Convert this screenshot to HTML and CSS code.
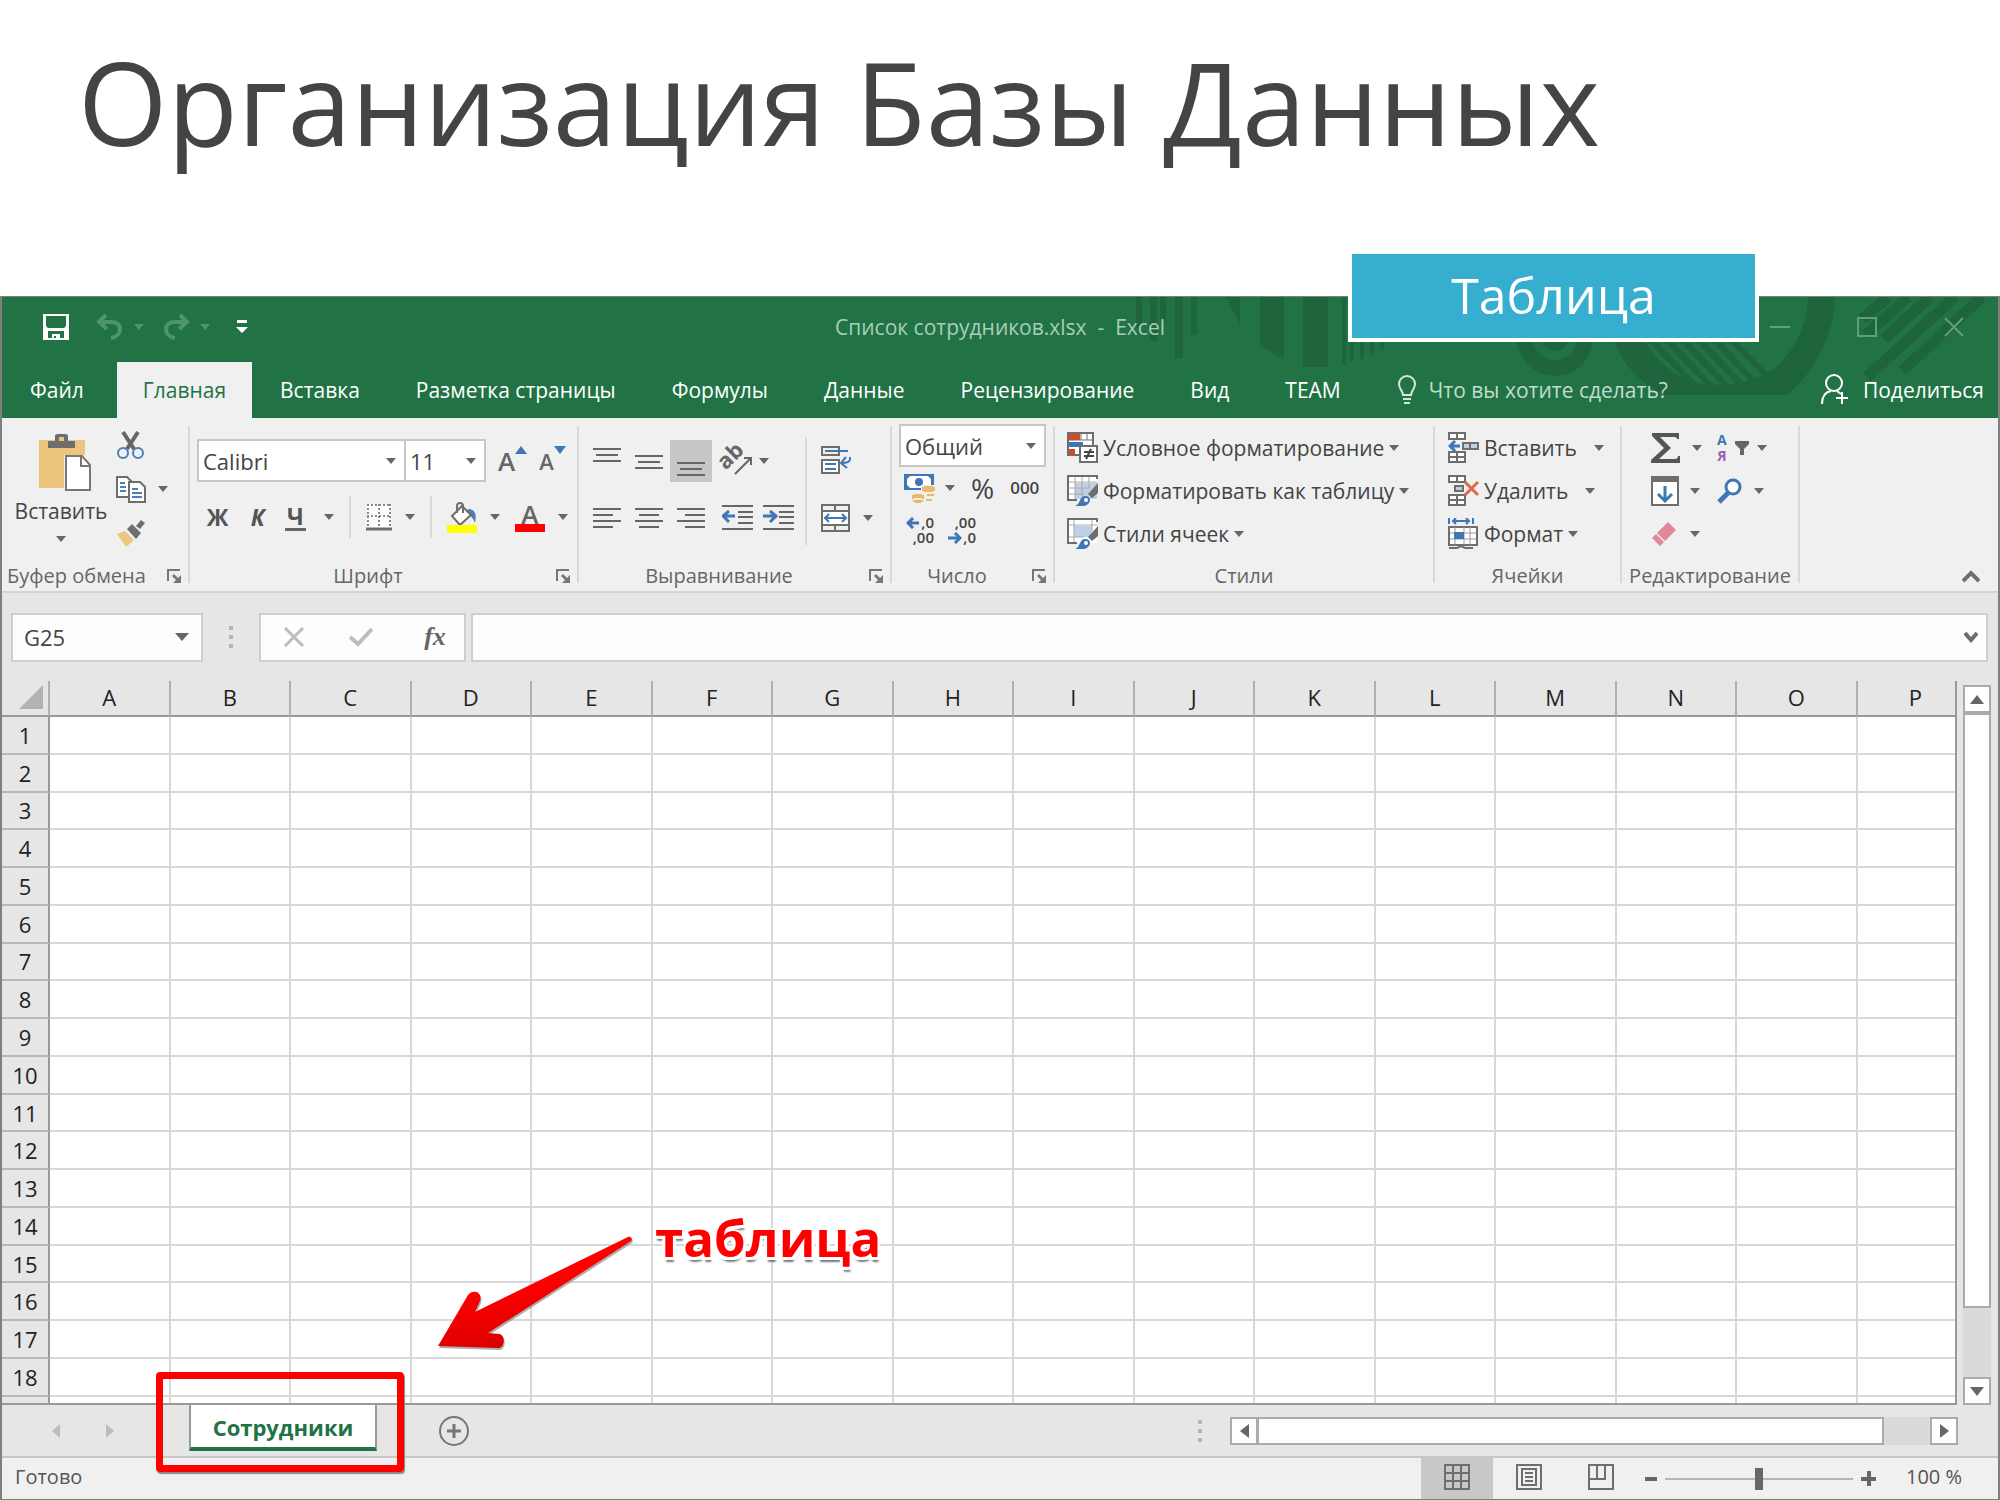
FILE: index.html
```html
<!DOCTYPE html>
<html lang="ru">
<head>
<meta charset="utf-8">
<title>Организация Базы Данных</title>
<link rel="stylesheet" href="styles.css">
</head>
<body>
<header class="slide-head"><h1>Организация Базы Данных</h1></header>

<main class="window">
  <div class="badge">Таблица</div>

  <div class="chrome">
    <svg class="pattern" viewBox="1120 0 878 121" width="878" height="121" aria-hidden="true">
      <g fill="#1e643d">
        <path d="M1136 0h6v31h-6zM1150 0h7v44h-7zM1175 0h8v61h-8zM1191 0h6v38h-6zM1160 0h6v24h-6zM1226 0h14v27zM1260 0h24v63l-24-15zM1303 0h25v70h-25zM1342 0h4v68h-4zM1350 0h4v64h-4zM1360 0h4v62h-4zM1370 0h4v58h-4zM1380 0h4v52h-4z"/>
        <circle cx="1555" cy="41" r="13"/>
        <path d="M1610 30C1616 60 1636 84 1665 98H1787C1815 75 1835 35 1835 0H1808C1808 30 1790 65 1765 77C1740 90 1705 90 1690 84C1660 70 1645 50 1640 30z"/>
      </g>
      <g fill="none" stroke="#1e643d">
        <circle cx="1555" cy="41" r="30" stroke-width="16"/>
        <path d="M1644 36l52 54M1660 36l52 54M1676 36l50 52M1692 36l48 50M1708 36l44 46M1724 36l42 42" stroke-width="6"/>
        <path d="M1982 0l-80 74M1955 0l-88 80M1930 0l-46 42M1908 0l-42 38M1888 0l-26 22" stroke-width="11"/>
      </g>
    </svg>

    <div class="titlebar">
      <div class="quick">
        <button class="ib" aria-label="Сохранить"><svg width="28" height="28" viewBox="0 0 28 28"><path d="M1 1h26v26H1z" fill="#fff"/><path d="M4 3h20v10l-2 2H6l-2-2z" fill="#217346"/><path d="M6 18h16v7H6z" fill="#217346"/><path d="M10 21h8v4h-4v-2h-2v2h-2z" fill="#fff"/></svg></button>
        <button class="ib undo" aria-label="Отменить"><svg width="28" height="28" viewBox="0 0 28 28" fill="none" stroke="#4f9370" stroke-width="4"><path d="M10 2L3 9l8 7M4 9h11c6 0 9 3 9 7s-3 8-9 9"/></svg><i class="dd"></i></button>
        <button class="ib redo" aria-label="Повторить"><svg width="28" height="28" viewBox="0 0 28 28" fill="none" stroke="#4f9370" stroke-width="4"><path d="M18 2l7 7-8 7M24 9H13c-6 0-9 3-9 7s3 8 9 9"/></svg><i class="dd"></i></button>
        <button class="ib" aria-label="Настройка панели"><svg width="12" height="14" viewBox="0 0 12 14" fill="#fff"><path d="M1 0h10v3H1zM0 7h12l-6 6z"/></svg></button>
      </div>
      <div class="doc">Список сотрудников.xlsx&nbsp; -&nbsp; Excel</div>
      <div class="sys">
        <button class="ib" aria-label="Свернуть"><svg width="20" height="20" fill="none" stroke="#5f9f7d" stroke-width="2"><path d="M0 10h20"/></svg></button>
        <button class="ib" aria-label="Развернуть"><svg width="20" height="20" fill="none" stroke="#5f9f7d" stroke-width="2"><path d="M1 1h18v18H1z"/></svg></button>
        <button class="ib" aria-label="Закрыть"><svg width="20" height="20" fill="none" stroke="#5f9f7d" stroke-width="2"><path d="M1 1l18 18M19 1L1 19"/></svg></button>
      </div>
    </div>

    <nav class="tabs">
      <button class="tab file">Файл</button>
      <button class="tab active">Главная</button>
      <button class="tab">Вставка</button>
      <button class="tab">Разметка страницы</button>
      <button class="tab">Формулы</button>
      <button class="tab">Данные</button>
      <button class="tab">Рецензирование</button>
      <button class="tab">Вид</button>
      <button class="tab">TEAM</button>
      <button class="tab tell"><svg width="20" height="30" viewBox="0 0 20 30" fill="none" stroke="#d5e6dc" stroke-width="2"><path d="M6 20c0-4-4-6-4-11a8 8 0 0 1 16 0c0 5-4 7-4 11zM6 24h8M7 28h6"/></svg>Что вы хотите сделать?</button>
      <button class="tab share"><svg width="30" height="32" viewBox="0 0 30 32" fill="none" stroke="#fff" stroke-width="2"><circle cx="14" cy="9" r="8"/><path d="M2 30c0-8 4-12 9-13M17 17l4 3M22 18v12M16 24h12"/></svg>Поделиться</button>
    </nav>
  </div>

  <div class="ribbon">
    <section class="group g-clip">
      <div class="body">
        <button class="paste">
          <svg width="54" height="58" viewBox="0 0 54 58"><path d="M1 7h46v48H1z" fill="#ecc57e"/><path d="M10 15V8h7V3q0-2 3-2h7q3 0 3 2v5h7v7z" fill="#6e6e6e"/><path d="M21 4h5v4h-5z" fill="#ecc57e"/><path d="M26 22h28v36H26z" fill="#f0f0f0"/><path d="M28 23h16l8 9v25H28z" fill="#fff" stroke="#777" stroke-width="2"/><path d="M43 23v10h9" fill="none" stroke="#777" stroke-width="2"/></svg>
          <span>Вставить</span><i class="dd"></i>
        </button>
        <div class="stack">
          <button class="ib" aria-label="Вырезать"><svg width="30" height="30" viewBox="0 0 30 30" fill="none"><path d="M7 2l11 17M22 2L11 19" stroke="#666" stroke-width="4"/><circle cx="7" cy="23" r="5" stroke="#4a7fb8" stroke-width="2"/><circle cx="22" cy="23" r="5" stroke="#4a7fb8" stroke-width="2"/></svg></button>
          <button class="ib" aria-label="Копировать"><svg width="30" height="30" viewBox="0 0 30 30"><g fill="#fff" stroke="#6e6e6e" stroke-width="2"><path d="M1 3h10l5 5v15H1z"/><path d="M13 8h11l5 5v15H13z"/></g><path d="M4 9h5M4 13h6M4 17h6M16 15h6M16 19h10M16 23h10" stroke="#4a7fb8" stroke-width="2"/></svg><i class="dd"></i></button>
          <button class="ib" aria-label="Формат по образцу"><svg width="30" height="30" viewBox="0 0 30 30"><path d="M1 16l8-3 9 9-8 7z" fill="#ecc57e"/><path d="M11 11l5-5 9 9-5 6zM20 8l5-6 4 3-5 6z" fill="#6e6e6e"/></svg></button>
        </div>
      </div>
      <footer><span>Буфер обмена</span><button class="ib" aria-label="Параметры буфера"><svg class="launch" viewBox="0 0 15 15" width="15" height="15"><use href="#launch"/></svg></button></footer>
    </section>

    <section class="group g-font">
      <div class="body col">
        <div class="row r1">
          <label class="pick fontname"><select aria-label="Шрифт"><option>Calibri</option></select><i class="dd"></i></label><label class="pick fontsize"><select aria-label="Размер"><option>11</option></select><i class="dd"></i></label>
          <button class="ib grow" aria-label="Увеличить размер"><b class="aa">A</b><svg width="12" height="8"><path d="M0 8l6-8 6 8z" fill="#3f76b5"/></svg></button>
          <button class="ib shrink" aria-label="Уменьшить размер"><b class="aa small">A</b><svg width="12" height="8"><path d="M0 0h12l-6 8z" fill="#3f76b5"/></svg></button>
        </div>
        <div class="row r2">
          <button class="ib fmt"><b>Ж</b></button>
          <button class="ib fmt"><b><em>К</em></b></button>
          <button class="ib fmt und"><b>Ч</b><i class="dd"></i></button>
          <span class="vsep"></span>
          <button class="ib" aria-label="Границы"><svg width="26" height="28" viewBox="0 0 26 28" fill="none"><path d="M1 1h24v24H1z" fill="#fff"/><path d="M1 2h24M1 13h24M2 1v23M13 1v23M24 1v23" stroke="#888" stroke-width="2" stroke-dasharray="2 2"/><path d="M0 26h26" stroke="#6e6e6e" stroke-width="3"/></svg><i class="dd"></i></button>
          <span class="vsep"></span>
          <button class="ib" aria-label="Заливка"><svg width="30" height="32" viewBox="0 0 30 32"><path d="M21 8c7 0 9 5 7 14-2-5-4-8-9-9z" fill="#4a7fb8"/><path d="M5 15L15 5l9 9-11 10z" fill="#fff" stroke="#6e6e6e" stroke-width="2"/><path d="M10 12V5q0-3 3-3t3 3v7" fill="none" stroke="#6e6e6e" stroke-width="2"/><path d="M0 24h30v8H0z" fill="#ff0"/></svg><i class="dd"></i></button>
          <button class="ib fontcol" aria-label="Цвет шрифта"><b class="aa">A</b><i class="dd"></i></button>
        </div>
      </div>
      <footer><span>Шрифт</span><button class="ib" aria-label="Параметры шрифта"><svg class="launch" viewBox="0 0 15 15" width="15" height="15"><use href="#launch"/></svg></button></footer>
    </section>

    <section class="group g-align">
      <div class="body">
        <div class="aligns">
          <button class="cell" aria-label="По верхнему краю"><svg width="28" height="28"><path d="M0 1h28v2H0zM3 7h22v2H3zM0 13h28v2H0z"/></svg></button>
          <button class="cell" aria-label="По середине"><svg width="28" height="28"><path d="M0 8h28v2H0zM3 14h22v2H3zM0 20h28v2H0z"/></svg></button>
          <button class="cell on" aria-label="По нижнему краю"><svg width="28" height="30"><path d="M0 16h28v2H0zM3 22h22v2H3zM0 28h28v2H0z"/></svg></button>
          <button class="ib wide" aria-label="Ориентация"><svg width="32" height="32" viewBox="0 0 32 32" overflow="visible"><text x="1" y="21" transform="rotate(-45 8 20)" font-size="22" font-weight="700" font-family="Open Sans, sans-serif" fill="#666">ab</text><path d="M13 29l15-15M29 20v-7h-7" fill="none" stroke="#666" stroke-width="2"/></svg><i class="dd"></i></button>
          <button class="cell" aria-label="По левому краю"><svg width="28" height="28"><path d="M0 5h28v2H0zM0 11h20v2H0zM0 17h28v2H0zM0 23h20v2H0z"/></svg></button>
          <button class="cell" aria-label="По центру"><svg width="28" height="28"><path d="M0 5h28v2H0zM4 11h20v2H4zM0 17h28v2H0zM4 23h20v2H4z"/></svg></button>
          <button class="cell" aria-label="По правому краю"><svg width="28" height="28"><path d="M0 5h28v2H0zM8 11h20v2H8zM0 17h28v2H0zM8 23h20v2H8z"/></svg></button>
          <div class="row wide">
            <button class="ib" aria-label="Уменьшить отступ"><svg width="31" height="28"><path d="M0 2h31v2H0zM16 8h15v2H16zM16 13h15v2H16zM16 19h15v2H16zM0 25h31v2H0z"/><path d="M1 13h12M7 8l-6 5 6 6" fill="none" stroke="#3f76b5" stroke-width="3"/></svg></button>
            <button class="ib" aria-label="Увеличить отступ"><svg width="31" height="28"><path d="M0 2h31v2H0zM16 8h15v2H16zM16 13h15v2H16zM16 19h15v2H16zM0 25h31v2H0z"/><path d="M0 13h12M7 8l6 5-6 6" fill="none" stroke="#3f76b5" stroke-width="3"/></svg></button>
          </div>
        </div>
        <span class="vsep"></span>
        <div class="wraps">
          <button class="ib" aria-label="Перенести текст"><svg width="31" height="30" viewBox="0 0 31 30" fill="none"><g stroke="#6e6e6e" stroke-width="2"><path d="M1 2h17v8H1z"/><path d="M1 15h17v13H1z" fill="#fff"/></g><path d="M4 6h23M4 19h11M4 24h11M29 12v2q0 4-8 4M25 12l-5 6 6 5" stroke="#3f76b5" stroke-width="2"/></svg></button>
          <button class="ib" aria-label="Объединить"><svg width="29" height="30" viewBox="0 0 29 30" fill="none"><path d="M1 2h27v26H1zM1 8h27M1 22h27M14 2v6M14 22v6" stroke="#6e6e6e" stroke-width="2"/><path d="M2 9h25v12H2z" fill="#fff"/><path d="M4 15h21M8 11l-4 4 4 4M21 11l4 4-4 4" stroke="#3f76b5" stroke-width="2"/></svg><i class="dd"></i></button>
        </div>
      </div>
      <footer><span>Выравнивание</span><button class="ib" aria-label="Параметры выравнивания"><svg class="launch" viewBox="0 0 15 15" width="15" height="15"><use href="#launch"/></svg></button></footer>
    </section>

    <section class="group g-num">
      <div class="body col">
        <label class="pick"><select aria-label="Числовой формат"><option>Общий</option></select><i class="dd"></i></label>
        <div class="row">
          <button class="ib" aria-label="Финансовый формат"><svg width="32" height="32" viewBox="0 0 32 32"><path d="M1 2h30v16H1z" fill="#3f76b5"/><path d="M4 7l3-3h18l3 3v6l-3 3H7l-3-3z" fill="#fff"/><circle cx="16" cy="10" r="4" fill="#3f76b5"/><path d="M18 13h14v17H8V21h10z" fill="#f0f0f0"/><path d="M21 14h9v1h2v4h-2v1h-9v-1h-2v-4h2zM11 22h8v1h2v4h-2v-1h-8v1H9v-4h2zM10 28h10v2h-2v1h-6v-1h-2zM24 22h7v2h-7zM23 27h6v2h-6z" fill="#ecb968"/></svg><i class="dd"></i></button>
          <button class="ib pct">%</button>
          <button class="ib ths">000</button>
        </div>
        <div class="row dec">
          <button class="digits"><span><svg width="14" height="12" fill="none" stroke="#3f76b5" stroke-width="3"><path d="M1 6h12M7 1L2 6l5 5"/></svg>,0</span><span>,00</span></button>
          <button class="digits"><span>,00</span><span><svg width="14" height="12" fill="none" stroke="#3f76b5" stroke-width="3"><path d="M0 6h12M7 1l5 5-5 5"/></svg>,0</span></button>
        </div>
      </div>
      <footer><span>Число</span><button class="ib" aria-label="Параметры числа"><svg class="launch" viewBox="0 0 15 15" width="15" height="15"><use href="#launch"/></svg></button></footer>
    </section>

    <section class="group g-style">
      <div class="body col list">
        <button class="cmd"><svg width="31" height="31" viewBox="0 0 31 31"><path d="M1 1h25v22H1z" fill="#fff" stroke="#6e6e6e" stroke-width="2"/><path d="M14 1v7M20 1v7M2 8h24" stroke="#6e6e6e"/><path d="M2 2h11v6H2zM2 17h6v6H2z" fill="#d24a2a"/><path d="M2 10h14v5H2z" fill="#3f76b5"/><path d="M13 14h17v16H13z" fill="#fff" stroke="#6e6e6e" stroke-width="2"/><path d="M17 20h10M17 24h10M24 17l-5 10" stroke="#444" stroke-width="2"/></svg>Условное форматирование<i class="dd"></i></button>
        <button class="cmd"><svg width="31" height="31" viewBox="0 0 31 31"><path d="M1 1h29v24H1z" fill="#fff"/><path d="M8 8h22v16H8z" fill="#bdd0e8"/><path d="M1 7h29M1 13h22M1 19h16M8 1v24M15 1v20M22 1v12" stroke="#aaa"/><path d="M30 4V1H1v24h9" fill="none" stroke="#6e6e6e" stroke-width="2"/><path d="M31 8v10l-6 5-4-4z" fill="#6e6e6e"/><path d="M8 31c6-2 4-11 11-10 7 1 4 10-3 10z" fill="#3f76b5"/><circle cx="19" cy="25" r="2" fill="#fff"/></svg>Форматировать как таблицу<i class="dd"></i></button>
        <button class="cmd"><svg width="31" height="31" viewBox="0 0 31 31"><path d="M1 1h29v24H1z" fill="#fff"/><path d="M7 8h18v11H7z" fill="#bdd0e8"/><path d="M1 7h29M7 1v24M1 19h16M25 1v12" stroke="#aaa"/><path d="M30 4V1H1v24h9" fill="none" stroke="#6e6e6e" stroke-width="2"/><path d="M31 8v10l-6 5-4-4z" fill="#6e6e6e"/><path d="M8 31c6-2 4-11 11-10 7 1 4 10-3 10z" fill="#3f76b5"/><circle cx="19" cy="25" r="2" fill="#fff"/></svg>Стили ячеек<i class="dd"></i></button>
      </div>
      <footer><span>Стили</span></footer>
    </section>

    <section class="group g-cells">
      <div class="body col list">
        <button class="cmd"><svg width="31" height="31" viewBox="0 0 31 31" fill="#fff" stroke="#6e6e6e" stroke-width="2"><path d="M1 1h16v6H1zM9 1v6M1 20h16v10H1zM1 25h16M9 20v10"/><path d="M15 11h15v6H15zM22 11v6" fill="#bdd0e8"/><path d="M2 14h10M7 9l-5 5 5 5" fill="none" stroke="#3f76b5" stroke-width="3"/></svg>Вставить<i class="dd gap"></i></button>
        <button class="cmd"><svg width="31" height="31" viewBox="0 0 31 31" fill="#fff" stroke="#6e6e6e" stroke-width="2"><path d="M1 1h16v6H1zM9 1v6M1 20h16v10H1zM1 25h16M9 20v10"/><path d="M7 11h8v5H7z" fill="#bdd0e8"/><path d="M17 7l13 13M30 7L17 20" fill="none" stroke="#e0674a" stroke-width="3"/></svg>Удалить<i class="dd gap"></i></button>
        <button class="cmd"><svg width="31" height="31" viewBox="0 0 31 31" fill="none"><path d="M1 9h28v18H1z" fill="#fff" stroke="#6e6e6e" stroke-width="2"/><path d="M2 15h26M2 21h26M7 9v18M16 9v18M22 9v18" stroke="#999"/><path d="M6 14h10v7H6z" fill="#3f76b5"/><path d="M1 0v6M25 0v6M5 3h16M8 0L5 3l3 3M18 0l3 3-3 3" stroke="#3f76b5" stroke-width="2"/><path d="M1 30h8l4-2 4 2h8" stroke="#6e6e6e" stroke-width="2"/></svg>Формат<i class="dd"></i></button>
      </div>
      <footer><span>Ячейки</span></footer>
    </section>

    <section class="group g-edit">
      <div class="body edits">
        <button class="ib" aria-label="Сумма"><svg width="30" height="30" viewBox="0 0 30 30"><path d="M1 0h27v6h-2q0-2-3-2H9l11 11L8 26h16q3 0 3-3h2v7H0v-3l13-12L1 3z" fill="#555"/></svg><i class="dd"></i></button>
        <button class="ib az" aria-label="Сортировка"><span class="letters"><b>А</b><b>Я</b></span><svg width="14" height="16"><path d="M0 1h14v3L9 9v6H5V9L0 4z" fill="#666"/></svg><i class="dd"></i></button>
        <button class="ib" aria-label="Заполнить"><svg width="28" height="30" viewBox="0 0 28 30"><path d="M1 1h26v28H1z" fill="#fff" stroke="#6e6e6e" stroke-width="2"/><path d="M1 1h26v5H1z" fill="#6e6e6e"/><path d="M14 10v14M7 18l7 7 7-7" fill="none" stroke="#3f76b5" stroke-width="3"/></svg><i class="dd"></i></button>
        <button class="ib find" aria-label="Найти"><svg width="26" height="26" viewBox="0 0 26 26" fill="none" stroke="#3f76b5"><circle cx="16" cy="9" r="7" stroke-width="3" fill="#fff"/><path d="M11 15l-9 9" stroke-width="5"/></svg><i class="dd"></i></button>
        <button class="ib" aria-label="Очистить"><svg width="28" height="26" viewBox="0 0 28 26" fill="#e4869a"><path d="M17 1l8 8-11 11-8-8zM5 13l8 8-4 4-8-8z"/></svg><i class="dd"></i></button>
      </div>
      <footer><span>Редактирование</span></footer>
    </section>
    <button class="ib collapse" aria-label="Свернуть ленту"><svg width="18" height="14" fill="none" stroke="#6e6e6e" stroke-width="4"><path d="M1 12l8-8 8 8"/></svg></button>
  </div>

  <div class="formula">
    <div class="namebox"><input value="G25" aria-label="Имя ячейки"><i class="dd big"></i></div>
    <span class="dots"><i></i><i></i><i></i></span>
    <div class="fx">
      <button class="ib" aria-label="Отмена"><svg width="22" height="20" fill="none" stroke="#bdbdbd" stroke-width="3"><path d="M2 1l18 18M20 1L2 19"/></svg></button>
      <button class="ib" aria-label="Ввод"><svg width="24" height="20" fill="none" stroke="#bdbdbd" stroke-width="4"><path d="M1 10l8 7L23 2"/></svg></button>
      <button class="ib fn"><em>fx</em></button>
    </div>
    <div class="line"><input aria-label="Строка формул"><svg width="14" height="12" fill="none" stroke="#6e6e6e" stroke-width="4"><path d="M1 2l6 7 6-7"/></svg></div>
  </div>

  <div class="sheet">
    <table class="grid" id="grid">
      <colgroup><col class="c-num"><col class="c" span="15"><col></colgroup>
      <thead><tr><th class="corner"><svg width="24" height="24" aria-hidden="true"><path d="M24 0v24H0z" fill="#b2b2b2"/></svg></th></tr></thead>
      <tbody></tbody>
    </table>
    <div class="vbar">
      <button class="sb" aria-label="Вверх"><svg width="14" height="9"><path d="M0 9l7-9 7 9z"/></svg></button>
      <div class="thumb"></div><div class="space"></div>
      <button class="sb" aria-label="Вниз"><svg width="14" height="9"><path d="M0 0h14L7 9z"/></svg></button>
    </div>
    <svg class="arrow" width="200" height="120" viewBox="437 1230 200 120" aria-hidden="true">
      <defs><linearGradient id="red" x1="0" y1="0" x2="0.3" y2="1"><stop offset="0.5" stop-color="#f00"/><stop offset="1" stop-color="#dc0000"/></linearGradient></defs>
      <path id="shaft" d="M438 1345L468 1294C472 1288 483 1290 480 1300L475 1311L628 1236C631 1235 633 1238 631 1240L488 1332L499 1333C506 1334 505 1347 498 1347z" fill="#777" opacity=".6" transform="translate(1 2)"/>
      <path d="M438 1345L468 1294C472 1288 483 1290 480 1300L475 1311L628 1236C631 1235 633 1238 631 1240L488 1332L499 1333C506 1334 505 1347 498 1347z" fill="url(#red)"/>
    </svg>
    <div class="note">таблица</div>
    <div class="frame"></div>
  </div>

  <div class="sheets">
    <button class="ib nav" aria-label="Предыдущий лист"><svg width="8" height="14"><path d="M8 0v14L0 7z" fill="#bcbcbc"/></svg></button>
    <button class="ib nav" aria-label="Следующий лист"><svg width="8" height="14"><path d="M0 0v14l8-7z" fill="#bcbcbc"/></svg></button>
    <button class="sheet-tab">Сотрудники</button>
    <button class="ib add" aria-label="Новый лист"><svg width="32" height="32" fill="none" stroke="#777"><circle cx="16" cy="16" r="14" stroke-width="2"/><path d="M16 9v14M9 16h14" stroke-width="3"/></svg></button>
    <span class="dots"><i></i><i></i><i></i></span>
    <div class="hbar">
      <button class="sb" aria-label="Влево"><svg width="9" height="14"><path d="M9 0v14L0 7z"/></svg></button>
      <div class="thumb"></div><div class="space"></div>
      <button class="sb" aria-label="Вправо"><svg width="9" height="14"><path d="M0 0v14l9-7z"/></svg></button>
    </div>
  </div>

  <div class="status">
    <span class="ready">Готово</span>
    <button class="view on" aria-label="Обычный"><svg width="26" height="26"><path d="M1 1h24v24H1zM9 1v24M17 1v24M1 9h24M1 17h24"/></svg></button>
    <button class="view" aria-label="Разметка"><svg width="26" height="26"><path d="M1 1h24v24H1zM6 5h14v16H6zM9 9h8M9 13h8M9 17h8"/></svg></button>
    <button class="view" aria-label="Страничный"><svg width="26" height="26"><path d="M1 1h24v24H1zM1 15h16V1M9 1v14"/></svg></button>
    <button class="ib minus" aria-label="Уменьшить"><svg width="12" height="4"><path d="M0 0h12v4H0z" fill="#666"/></svg></button>
    <input class="zoom" type="range" min="0" max="100" value="50" aria-label="Масштаб">
    <button class="ib" aria-label="Увеличить"><svg width="15" height="15"><path d="M6 0h4v6h5v4h-5v5H6v-5H0V6h6z" fill="#666"/></svg></button>
    <span class="pc">100 %</span>
  </div>
</main>

<svg width="0" height="0" class="defs" aria-hidden="true"><symbol id="launch" viewBox="0 0 15 15"><path d="M1 12V1h12" fill="none" stroke="#777" stroke-width="2"/><path d="M14 6v8H6l3-3-4-4 2-2 4 4z" fill="#777"/></symbol></svg>
<script src="script.js"></script>
</body>
</html>
```
FILE: styles.css
```css
* { box-sizing: border-box; }
body { margin: 0; background: #fff; color: #444; font: 21px/28px "Open Sans", "Noto Sans", sans-serif; }
button, input, select { font: inherit; color: inherit; }
button { background: none; border: 0; padding: 0; margin: 0; }
svg { display: block; flex: none; }
.defs { position: absolute; }
.ib { display: flex; align-items: center; }
.row { display: flex; align-items: center; }
.dd { width: 0; height: 0; border: 5px solid transparent; border-top: 6px solid #666; border-bottom: 0; flex: none; }

.slide-head { padding: 22px 78px 0; height: 296px; }
h1 { margin: 0; font-size: 115px; line-height: 160px; font-weight: 400; color: #444; white-space: nowrap; }

.window { position: relative; border: 2px solid #7f7f7f; border-top-width: 1px; background: #e6e6e6; }
.badge { position: absolute; z-index: 2; top: -47px; right: 239px; width: 411px; height: 92px; border: 4px solid #fff; background: #36aecf; color: #fff; font-size: 50px; line-height: 82px; text-align: center; }

.chrome { position: relative; background: #217346; color: #fff; }
.pattern { position: absolute; top: 0; right: 0; }
.titlebar { position: relative; display: grid; grid-template-columns: 1fr auto 1fr; align-items: center; height: 65px; padding-bottom: 5px; }
.quick { display: flex; align-items: center; padding-left: 40px; gap: 26px; }
.quick .ib { gap: 10px; }
.quick .undo { margin-right: -8px; }
.quick .dd { border-top-color: #4f9370; }
.doc { color: #a9cdb8; }
.sys { display: flex; justify-content: flex-end; gap: 67px; padding-right: 34px; }
.tabs { position: relative; display: flex; height: 56px; }
.tab { padding: 0 28px; color: #fff; white-space: nowrap; }
.tab.file { padding-right: 33px; }
.tab.active { padding: 0 26px; background: #f0f0f0; color: #217346; }
.tell { display: flex; align-items: center; gap: 12px; color: #c3dccd; }
.share { display: flex; align-items: center; gap: 13px; margin-left: auto; padding-right: 14px; }

.ribbon { display: flex; height: 175px; background: #f0f0f0; border-bottom: 2px solid #d4d4d4; padding: 8px 0; }
.group { display: flex; flex-direction: column; flex: none; border-right: 2px solid #d9d9d9; }
.group .body { flex: 1; display: flex; min-height: 0; }
.group .col { flex-direction: column; }
.group footer { display: flex; align-items: center; height: 22px; margin-bottom: -4px; font-size: 20px; line-height: 22px; color: #666; }
.group footer span { flex: 1; text-align: center; white-space: nowrap; }
.group footer span:not(:last-child) { padding-right: 10px; }
.group footer .ib { margin-right: 6px; }
.g-clip { width: 188px; }
.group.g-clip footer span { text-align: left; padding: 0 0 0 5px; }
.g-font { width: 389px; }
.g-align { width: 313px; }
.g-num { width: 163px; }
.g-style { width: 380px; }
.g-cells { width: 187px; }
.g-edit { width: 178px; }
.vsep { width: 2px; align-self: stretch; background: #dadada; }

.paste { display: flex; flex-direction: column; align-items: center; width: 92px; margin: 7px 9px 0 13px; }
.paste svg { margin-left: 8px; }
.paste span { margin: 6px 0 11px; }
.stack { display: flex; flex-direction: column; gap: 14px; padding-top: 4px; }
.stack .ib { gap: 12px; }

.pick { position: relative; display: flex; align-items: center; flex: none; height: 43px; background: #fff; border: 2px solid #c6c6c6; }
.pick select { appearance: none; width: 100%; height: 100%; padding: 0 4px; border: 0; background: none; font-size: 22px; }
.pick .dd { position: absolute; right: 8px; }
.g-font .body { padding: 13px 0 0 7px; }
.fontname { width: 209px; }
.fontsize { width: 80px; border-left: 0; }
.aa { font-size: 26px; font-weight: 600; line-height: 30px; color: #666; }
.aa.small { font-size: 22px; }
.grow { margin-left: 12px; align-items: flex-start; }
.shrink { margin-left: 12px; align-items: flex-start; }
.r2 { height: 42px; margin-top: 14px; gap: 15px; padding-left: 8px; }
.r2 .ib { gap: 13px; }
.fmt { min-width: 25px; justify-content: center; color: #555; font-size: 23px; }
.r2 .und { gap: 18px; }
.und b { border-bottom: 3px solid #666; line-height: 24px; padding: 0 2px; }
.fontcol b { width: 30px; height: 30px; border-bottom: 8px solid #f00; line-height: 24px; text-align: center; }

.g-align .body { padding: 14px 0 10px 7px; fill: #666; }
.aligns { display: grid; grid-template-columns: 42px 42px 42px 85px; grid-template-rows: 42px 42px; row-gap: 14px; align-content: start; }
.cell { display: flex; align-items: center; justify-content: center; }
.cell.on { background: #c6c6c6; }
.wide { padding-left: 10px; gap: 10px; }
.aligns .ib.wide { gap: 5px; }
.g-align .vsep { margin: -3px 14px 10px 8px; }
.wraps { display: flex; flex-direction: column; gap: 28px; padding-top: 5px; }
.wraps .ib { gap: 13px; }

.g-num .pick { width: 147px; margin: -2px 0 0 7px; }
.g-num .row { padding-left: 11px; height: 42px; gap: 16px; }
.g-num .row .ib:first-child { gap: 10px; }
.pct { font-size: 28px; }
.ths { font-size: 17px; font-weight: 600; }
.digits { width: 31px; margin-right: -5px; font-size: 15px; line-height: 15px; font-weight: 600; }
.digits span { display: flex; align-items: center; justify-content: flex-end; gap: 1px; }

.list { padding-left: 13px; }
.cmd { display: flex; align-items: center; flex: none; gap: 5px; height: 43px; white-space: nowrap; text-align: left; }
.cmd .gap { margin-left: 12px; }
.g-style .list { padding-left: 12px; }
.group .edits { display: grid; grid-template-columns: 66px 80px; grid-auto-rows: 43px; padding-left: 29px; align-content: start; }
.edits .ib { gap: 11px; }
.az .letters { display: flex; flex-direction: column; font-size: 14px; line-height: 16px; color: #3f76b5; }
.az .letters b + b { color: #9a5cb8; }
.edits .az { gap: 8px; }
.collapse { margin: 0 18px 0 auto; align-self: flex-end; }

.formula { display: flex; align-items: center; height: 88px; padding: 20px 10px 20px 9px; }
.namebox, .fx, .line { display: flex; align-items: center; height: 49px; background: #fdfdfd; border: 2px solid #cecece; }
.namebox { width: 192px; padding-right: 12px; }
.formula input { flex: 1; min-width: 0; border: 0; background: none; padding: 0 11px; font-size: 22px; }
.big { border-width: 7px; border-top-width: 8px; border-bottom-width: 0; }
.dots { display: flex; flex-direction: column; gap: 5px; }
.dots i { width: 4px; height: 4px; background: #b5b5b5; }
.formula .dots { margin: 0 26px; }
.fx { width: 207px; padding: 0 11px 0 22px; justify-content: space-between; margin-right: 5px; }
.fn { font: 700 26px/30px "Liberation Serif", serif; color: #666; width: 36px; justify-content: center; }
.line { flex: 1; padding-right: 8px; }

.sheet { position: relative; display: flex; gap: 6px; padding-right: 7px; }
.grid { flex: 1; min-width: 0; height: 724px; table-layout: fixed; border-collapse: separate; border-spacing: 0; border-right: 2px solid #999; border-bottom: 2px solid #999; color: #222; }
.c-num { width: 48px; }
.c { width: 6.17%; }
.grid thead tr { height: 36px; }
.grid th { padding: 0; font-size: 22px; line-height: 26px; font-weight: 400; text-align: center; border-bottom: 2px solid #b8b8b8; border-right: 2px solid #999; }
.grid thead th { padding-bottom: 2px; border-bottom-color: #999; border-right-color: #b0b0b0; }
.grid thead th:last-child { padding-left: 18px; border-right: 0; }
.grid td { padding: 0; background: #fff; border-right: 2px solid #d8d8d8; border-bottom: 2px solid #d8d8d8; }
.grid td:last-child { border-right: 0; }
.grid .part { height: 6px; }
.grid .part > * { border-bottom: 0; }
.corner svg { margin: 0 5px 0 auto; }
.sb { display: flex; align-items: center; justify-content: center; flex: none; width: 28px; height: 28px; background: #fff; border: 2px solid #ababab; fill: #666; }
.thumb { background: #fff; border: 2px solid #ababab; }
.space { background: #dadada; }
.vbar { display: flex; flex-direction: column; width: 28px; padding-top: 4px; }
.vbar .thumb { flex: 595; }
.vbar .space { flex: 69; }

.arrow { position: absolute; left: 435px; bottom: 54px; }
.note { position: absolute; left: 653px; bottom: 138px; color: #f00; font-size: 51px; line-height: 60px; font-weight: 700; text-shadow: -2px 0 #fff, 2px 0 #fff, 0 -2px #fff, 0 3px #fff, 3px 3px #fff, -3px 3px #fff, 1px 5px 2px #777; }
.frame { position: absolute; z-index: 1; left: 154px; bottom: -67px; width: 248px; height: 100px; border: 7px solid #f00; border-radius: 4px; box-shadow: 1px 2px 1px #888; }

.sheets { display: flex; align-items: center; height: 53px; padding-right: 40px; border-bottom: 2px solid #c6c6c6; }
.nav { margin-left: 50px; }
.nav + .nav { margin-left: 46px; }
.sheet-tab { align-self: flex-start; width: 188px; height: 48px; margin: -2px 61px 0 75px; padding-top: 4px; background: #fff; border: solid #999; border-width: 0 2px; border-bottom: 4px solid #217346; color: #217346; font-size: 22px; font-weight: 700; }
.sheets .dots { margin-left: auto; margin-right: 28px; }
.hbar { display: flex; width: 728px; height: 28px; }
.hbar .thumb { flex: 627; margin-left: -1px; }
.hbar .space { flex: 46; }

.status { display: flex; align-items: center; height: 41px; padding: 0 36px 0 13px; background: #f0f0f0; font-size: 20px; color: #555; }
.status span { padding-bottom: 4px; }
.ready { margin-right: auto; }
.view { display: flex; align-items: center; justify-content: center; width: 72px; height: 100%; padding-bottom: 3px; fill: none; stroke: #6e6e6e; stroke-width: 2; }
.view.on { background: #c8c8c8; }
.minus { margin-left: 8px; }
.zoom { appearance: none; width: 188px; height: 24px; margin: 0 8px; background: linear-gradient(#b5b5b5, #b5b5b5) center / 100% 2px no-repeat; }
.zoom::-webkit-slider-thumb { appearance: none; width: 8px; height: 22px; background: #666; }
.pc { margin-left: 30px; }
```
FILE: script.js
```js
// Fill the worksheet: column letters, 18 numbered rows and a clipped last row.
const grid = document.getElementById('grid');
const letters = 'ABCDEFGHIJKLMNOP'.split('');
const head = grid.tHead.rows[0];
letters.forEach(l => {
  const th = document.createElement('th');
  th.scope = 'col';
  th.textContent = l;
  head.appendChild(th);
});
for (let r = 1; r <= 19; r++) {
  const tr = grid.tBodies[0].insertRow();
  const th = document.createElement('th');
  th.scope = 'row';
  if (r < 19) th.textContent = r; else tr.className = 'part';
  tr.appendChild(th);
  letters.forEach(() => tr.insertCell());
}
```
